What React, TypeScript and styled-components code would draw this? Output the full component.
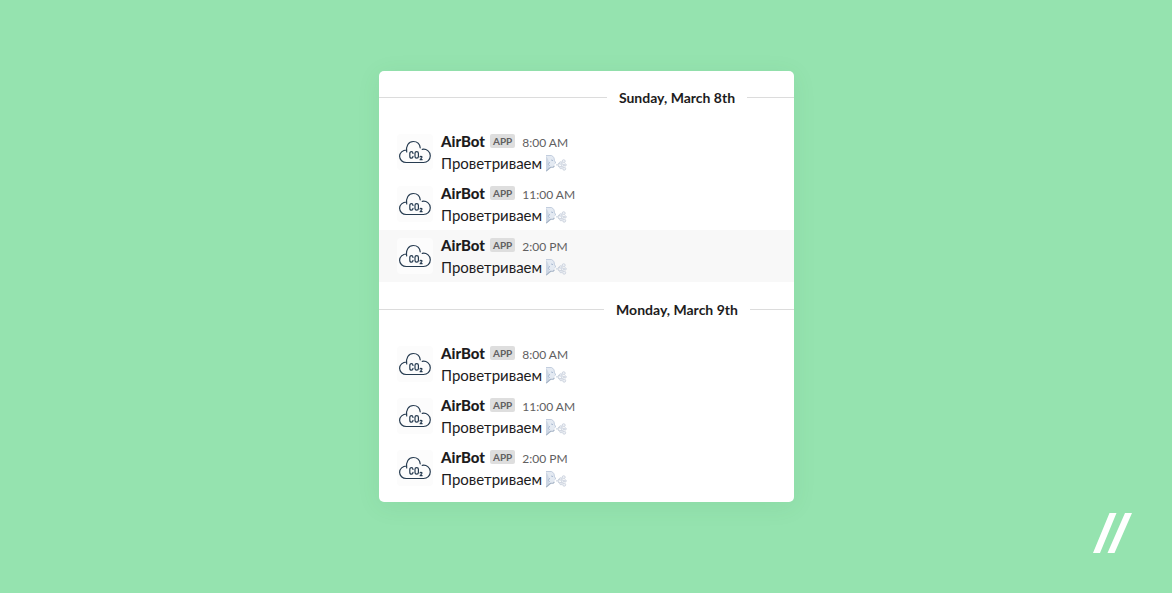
import React from "react";
import styled, { createGlobalStyle } from "styled-components";

const GlobalStyle = createGlobalStyle`
  * { box-sizing: border-box; }
  body {
    margin: 0;
    background: #95e3af;
    color: #1d1c1d;
    font-family: Lato, "Open Sans", sans-serif;
    -webkit-font-smoothing: antialiased;
  }
`;

const Page = styled.main`
  position: relative;
  min-height: 100vh;
  display: flex;
  justify-content: center;
  align-items: flex-start;
  padding: 71px 16px 88px 17px;
`;

const Card = styled.div`
  flex: 0 1 415px;
  min-width: 0;
  padding-bottom: 8px;
  background: #fff;
  border-radius: 5px;
  box-shadow: 0 4px 24px rgba(40, 120, 70, 0.08);
  overflow: hidden;
`;

const Day = styled.section`
  & + & {
    margin-top: 1px;
  }
`;

const DayHeader = styled.header`
  display: flex;
  align-items: center;
  gap: 12px;
  height: 55px;
  padding-bottom: 2px;

  &::before,
  &::after {
    content: "";
    height: 1px;
    background: #dcdcdc;
  }
  &::before {
    flex: 1 1 181px;
  }
  &::after {
    flex: 1 1 0;
  }
`;

const DayTitle = styled.h2`
  margin: 0;
  font-size: 14px;
  line-height: 20px;
  font-weight: 700;
  white-space: nowrap;
`;

const Messages = styled.ul`
  margin: 0;
  padding: 0;
  list-style: none;
`;

const Message = styled.li<{ $active?: boolean }>`
  display: flex;
  gap: 8px;
  height: 52px;
  padding: 4px 18px;
  background: ${(p) => (p.$active ? "#f8f8f8" : "transparent")};
`;

const Avatar = styled.div`
  flex: none;
  width: 36px;
  height: 36px;
  margin-top: 4px;
  border-radius: 4px;
  background: #fcfcfc;

  svg {
    display: block;
  }
`;

const Body = styled.div`
  min-width: 0;
`;

const Meta = styled.div`
  display: flex;
  align-items: center;
  height: 22px;
`;

const Author = styled.span`
  font-size: 15px;
  line-height: 22px;
  font-weight: 900;
`;

const Badge = styled.span`
  margin: 0 7px 0 5px;
  padding: 0 3px;
  border-radius: 2px;
  background: #dedede;
  color: #616061;
  font-size: 10px;
  line-height: 14px;
  font-weight: 700;
`;

const Time = styled.time`
  padding-top: 4px;
  color: #616061;
  font-size: 12px;
  line-height: 20px;
`;

const Text = styled.p`
  display: flex;
  align-items: center;
  gap: 3px;
  margin: 0;
  font-size: 15px;
  line-height: 22px;
`;

const Brand = styled.svg`
  position: absolute;
  right: 40px;
  bottom: 40px;
`;

const CloudIcon = () => (
  <svg width="36" height="36" viewBox="0 0 36 36" fill="none" role="img" aria-label="CO₂">
    <path
      d="M9.6 16C5.6 16 2.6 18.8 2.6 22.3C2.6 25.8 5.6 28.5 9.2 28.5H26.5C30.3 28.5 33.3 25.6 33.3 21.8C33.3 17.5 29.4 14.4 25.2 15.3M9.7 18C8.6 12 11.7 7.5 16.2 7.5C20 7.5 22.8 10 23.2 13.8"
      stroke="#263b50"
      strokeWidth="1.2"
      strokeLinecap="round"
      strokeLinejoin="round"
    />
    <g stroke="#263b50" strokeWidth="1.2" strokeLinecap="round" strokeLinejoin="round">
      <path d="M16 19.5C15.9 18.2 15.4 17.6 14.5 17.6C13.4 17.6 12.8 18.4 12.8 19.6V22.2C12.8 23.4 13.4 24.2 14.5 24.2C15.4 24.2 15.9 23.6 16 22.4" />
      <rect x="18" y="17.6" width="3.4" height="6.6" rx="1.7" />
      <path d="M23.1 23C23.2 21.9 25 22 24.9 23.2C24.8 24 23.8 24.6 23.1 25.7H25.1" />
    </g>
  </svg>
);

const WindFaceIcon = () => (
  <svg width="22" height="18" viewBox="0 0 22 18" fill="none" role="img" aria-label="🌬️">
    <path
      d="M1 1.5H6.5C8.5 2.3 9.6 4.2 9.4 6.2L10.8 8.9L9.5 9.8V11.6C9 13.1 7.6 13.4 6 13.2L1 17.5Z"
      fill="#e4eaf2"
    />
    <path d="M1 2V17.5L4.8 13.8L3 10.8L3.8 7.5L2.4 4Z" fill="#cdd6e3" />
    <path d="M1.2 17.2L5.6 13.3H8.2L9.4 11.8" stroke="#a3b1c4" strokeWidth="1.1" />
    <path d="M1 1.5H6.4C8.4 2.3 9.5 4.2 9.3 6.2L10.7 8.9L9.6 9.6" stroke="#bcc8da" strokeWidth="0.9" />
    <path d="M6.2 6L8 6.6M4.6 8L3.4 10.4L4.6 12" stroke="#9fb1cb" strokeWidth="0.9" />
    <path
      d="M11.5 10.8H14M13.5 9.5L15.5 8.8M13.5 12.2L15.5 13.4"
      stroke="#ccd3de"
      strokeWidth="1.2"
      strokeLinecap="round"
    />
    <g stroke="#c6cedb" strokeWidth="0.8" fill="#edf0f5">
      <circle cx="15.8" cy="9" r="1.3" />
      <circle cx="18.7" cy="7.2" r="1.5" />
      <circle cx="17.6" cy="11.3" r="1.2" />
      <circle cx="20.2" cy="10.9" r="1.1" />
      <circle cx="19.2" cy="14.7" r="1.5" />
      <circle cx="16" cy="13.6" r="1.2" />
    </g>
  </svg>
);

interface DayData {
  title: string;
  messages: { time: string; active?: boolean }[];
}

const days: DayData[] = [
  {
    title: "Sunday, March 8th",
    messages: [{ time: "8:00 AM" }, { time: "11:00 AM" }, { time: "2:00 PM", active: true }],
  },
  {
    title: "Monday, March 9th",
    messages: [{ time: "8:00 AM" }, { time: "11:00 AM" }, { time: "2:00 PM" }],
  },
];

export default function App() {
  return (
    <>
      <GlobalStyle />
      <Page>
        <Card>
          {days.map((day) => (
            <Day key={day.title}>
              <DayHeader>
                <DayTitle>{day.title}</DayTitle>
              </DayHeader>
              <Messages>
                {day.messages.map((message) => (
                  <Message key={message.time} $active={message.active}>
                    <Avatar>
                      <CloudIcon />
                    </Avatar>
                    <Body>
                      <Meta>
                        <Author>AirBot</Author>
                        <Badge>APP</Badge>
                        <Time>{message.time}</Time>
                      </Meta>
                      <Text>
                        Проветриваем
                        <WindFaceIcon />
                      </Text>
                    </Body>
                  </Message>
                ))}
              </Messages>
            </Day>
          ))}
        </Card>
        <Brand width="40" height="40" viewBox="0 0 40 40" fill="#fff" aria-hidden="true">
          <path d="M17.5 0H24.5L8 40H1ZM33 0H40L22.5 40H15.5Z" />
        </Brand>
      </Page>
    </>
  );
}
